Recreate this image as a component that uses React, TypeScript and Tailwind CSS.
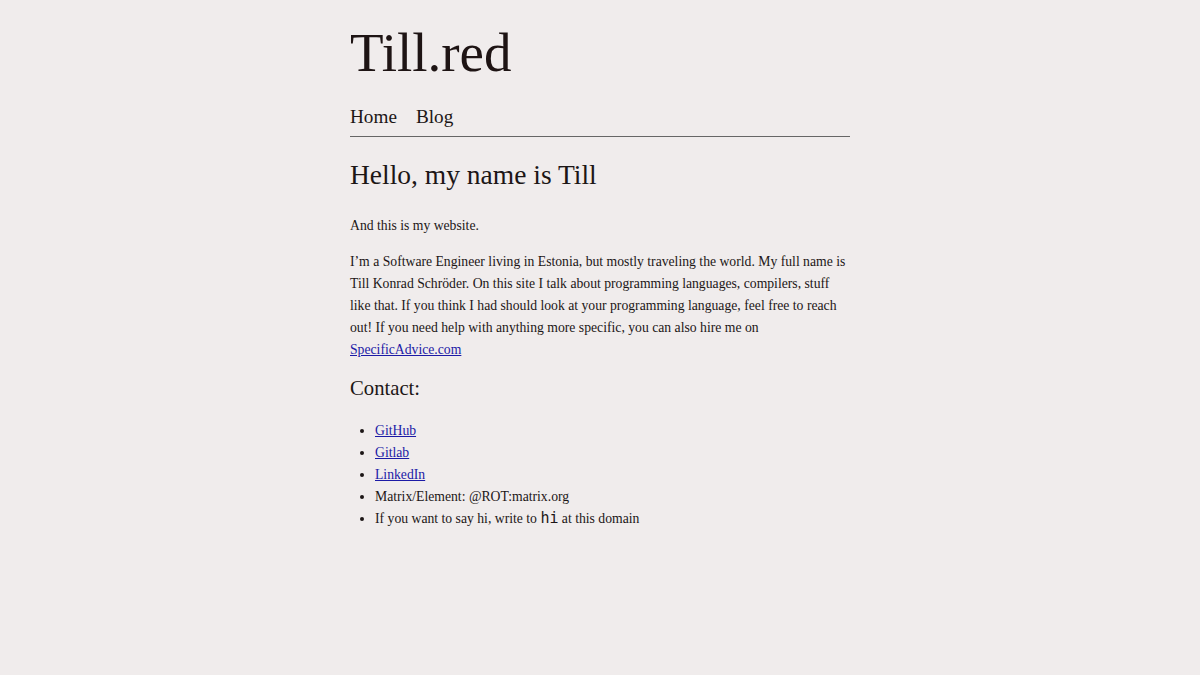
import React from "react";

export default function App() {
  const serif = { fontFamily: '"Liberation Serif", "Times New Roman", serif' };
  return (
    <div className="min-h-[675px] w-full bg-[#f0ecec] text-[#1c1616]" style={serif}>
      <div className="mx-auto w-[500px] pt-[19px]">
        <h1 className="text-[55px] leading-[68px] text-[#1e1414]">Till.red</h1>
        <nav className="mt-[18px] flex gap-[19px] border-b border-[#666] pb-[7px] text-[19.2px] leading-[24px]">
          <a>Home</a>
          <a>Blog</a>
        </nav>
        <h2 className="mt-[21px] text-[27.5px] leading-[34px]">Hello, my name is Till</h2>
        <p className="mt-[23px] text-[13.7px] leading-[22px]">And this is my website.</p>
        <p className="mt-[14px] text-[13.7px] leading-[22px]">
          I’m a Software Engineer living in Estonia, but mostly traveling the world. My full name is Till Konrad
          Schröder. On this site I talk about programming languages, compilers, stuff like that. If you think I
          had should look at your programming language, feel free to reach out! If you need help with anything
          more specific, you can also hire me on{" "}
          <a className="text-[#1c1aa6] underline">SpecificAdvice.com</a>
        </p>
        <h3 className="mt-[13px] text-[20.7px] leading-[28px]">Contact:</h3>
        <ul className="mt-[18px] list-disc pl-[25px] text-[13.7px] leading-[22px]">
          <li><a className="text-[#1c1aa6] underline">GitHub</a></li>
          <li><a className="text-[#1c1aa6] underline">Gitlab</a></li>
          <li><a className="text-[#1c1aa6] underline">LinkedIn</a></li>
          <li>Matrix/Element: @ROT:matrix.org</li>
          <li>
            If you want to say hi, write to{" "}
            <code style={{ fontFamily: '"DejaVu Sans Mono", monospace' }} className="text-[15px] leading-[0]">hi</code> at this domain
          </li>
        </ul>
      </div>
    </div>
  );
}
